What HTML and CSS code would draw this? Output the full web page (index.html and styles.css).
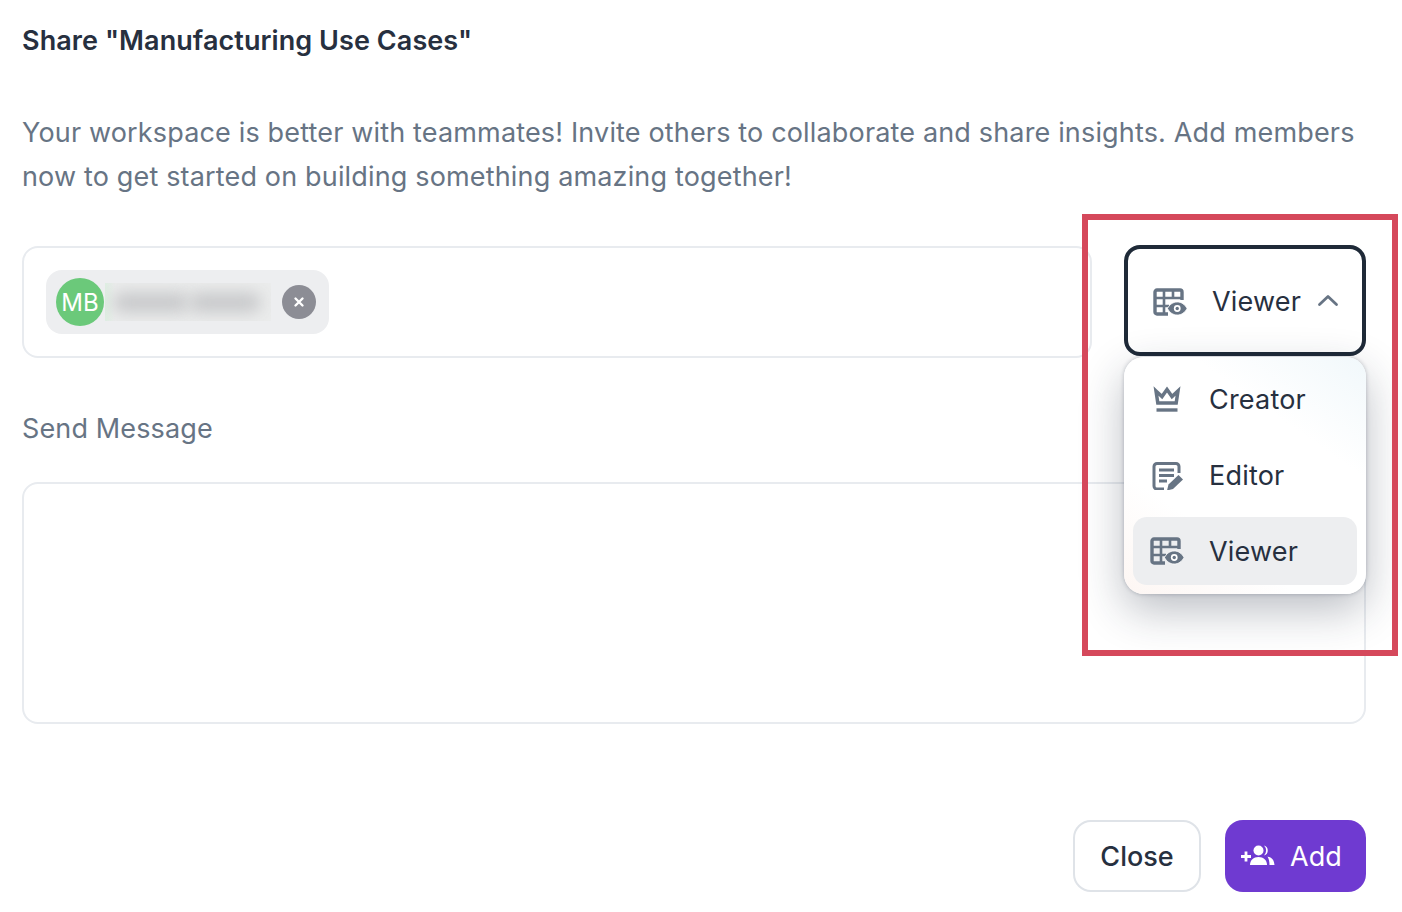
FILE: index.html
```html
<!DOCTYPE html>
<html lang="en">
<head>
<meta charset="utf-8">
<title>Share</title>
<link rel="stylesheet" href="styles.css">
</head>
<body>
<main class="dialog">
  <h1 class="title">Share "Manufacturing Use Cases"</h1>
  <p class="desc">Your workspace is better with teammates! Invite others to collaborate and share insights. Add members now to get started on building something amazing together!</p>

  <div class="invite">
    <div class="people">
      <div class="chip">
        <span class="avatar">MB</span>
        <span class="blurbox"><span class="blurtext"></span><span class="blurtext short"></span></span>
        <span class="remove">
          <svg viewBox="0 0 12 12" width="12" height="12"><path d="M2.500 2.500l7 7M9.500 2.500l-7 7" stroke="#fff" stroke-width="2.400" stroke-linecap="round" fill="none"/></svg>
        </span>
      </div>
    </div>
    <div class="role">
      <button class="select">
        <svg class="icon" viewBox="0 0 34 28" width="34" height="28"><use href="#viewer"/></svg>
        <span class="select-label">Viewer</span>
        <svg class="chev" viewBox="0 0 24 14" width="24" height="14"><path d="M3.500 11.500l8.500-8 8.500 8" fill="none" stroke="#677484" stroke-width="2.800" stroke-linecap="round" stroke-linejoin="round"/></svg>
      </button>
      <ul class="menu">
        <li class="item">
          <svg class="icon" viewBox="0 0 34 28" width="34" height="28"><path d="M6 5l6 5.500 5-7 5 7 6-5.500-1.800 12H7.800z" fill="none" stroke="#677484" stroke-width="3.500" stroke-linejoin="miter"/><path d="M6.500 24h21" stroke="#677484" stroke-width="3.400" fill="none"/></svg>
          <span>Creator</span>
        </li>
        <li class="item">
          <svg class="icon" viewBox="0 0 34 28" width="34" height="28"><path d="M29 11V4.500A3 3 0 0 0 26 1.500H7A3 3 0 0 0 4 4.500V24a3 3 0 0 0 3 3h7" fill="none" stroke="#677484" stroke-width="3"/><path d="M9 8h15M9 13.500h15M9 19h8" stroke="#677484" stroke-width="3" fill="none"/><path d="M17 28.500l1.500-6 10-9.500 4.500 4.500-10 9.500z" fill="#677484"/></svg>
          <span>Editor</span>
        </li>
        <li class="item active">
          <svg class="icon" viewBox="0 0 34 28" width="34" height="28"><use href="#viewer"/></svg>
          <span>Viewer</span>
        </li>
      </ul>
    </div>
  </div>

  <label class="msg-label">Send Message</label>
  <div class="textarea"></div>

  <div class="actions">
    <button class="btn close">Close</button>
    <button class="btn add">
      <svg viewBox="0 0 34 24" width="34" height="24"><path d="M0 12.500h10M5 7.500v10" stroke="#fff" stroke-width="2.800" fill="none"/><circle cx="17.500" cy="6.500" r="5" fill="#fff"/><path d="M9 21c0-5 3.500-8 8.500-8s8.500 3 8.500 8z" fill="#fff"/><path d="M23 1.500a5.200 5.200 0 0 1 0 10 7 7 0 0 0 0-10zM26.500 12.500c4.500 1 6.500 3.500 7 8.500h-5c0-3-.5-6-2-8.500z" fill="#fff"/></svg>
      <span>Add</span>
    </button>
  </div>
</main>

<div class="highlight"></div>

<svg class="defs" width="0" height="0" aria-hidden="true">
  <symbol id="viewer" viewBox="0 0 34 28">
    <path d="M15 26H4a2 2 0 0 1-2-2V4a2 2 0 0 1 2-2h23a2 2 0 0 1 2 2v8" fill="none" stroke="#677484" stroke-width="3.400"/>
    <path d="M2 10h27M2 18h14M11 2v24M20 2v8" fill="none" stroke="#677484" stroke-width="2.600"/>
    <path d="M14.500 20.500c2-4 5.500-6.500 9.750-6.500S32 16.500 34 20.500c-2 4-5.500 6.500-9.750 6.500S16.500 24.500 14.500 20.500z" fill="#677484" stroke="#fff" stroke-width=".8"/>
    <circle cx="24.250" cy="20.500" r="3.400" fill="#fff"/>
    <circle cx="24.250" cy="20.500" r="1.700" fill="#677484"/>
  </symbol>
</svg>
</body>
</html>
```
FILE: styles.css
```css
* { box-sizing: border-box; }
html, body { margin: 0; padding: 0; background: #fff; }
body { width: 1402px; height: 912px; overflow: hidden; font-family: Inter, "Liberation Sans", sans-serif; color: #1f2937; position: relative; }
.dialog { padding: 0 36px 0 22px; display: flex; flex-direction: column; height: 912px; }
.title { margin: 23px 0 0; font-size: 27px; line-height: 36px; font-weight: 600; color: #27303f; letter-spacing: .07px; }
.desc { margin: 52px 0 0; font-size: 27px; line-height: 44px; color: #677484; font-weight: 400; width: 1344px; letter-spacing: .16px; }
.invite { display: flex; margin-top: 48px; height: 112px; position: relative; }
.people { width: 1071px; height: 112px; margin-top: -1px; border: 2px solid #e8ebef; border-radius: 16px; padding: 22px; }
.chip { display: inline-flex; align-items: center; height: 64px; width: 283px; background: #edeef0; border-radius: 16px; padding: 0 13px 0 10px; }
.avatar { width: 48px; height: 48px; flex: none; border-radius: 50%; background: #6bc97a; color: #fff; font-size: 24px; display: flex; align-items: center; justify-content: center; }
.blurbox { width: 166px; height: 38px; flex: none; margin-left: 1px; overflow: hidden; display: flex; align-items: center; gap: 0; padding: 0 8px; background: linear-gradient(90deg, #deeee2 0, #ebecec 10px); }
.blurtext { display: block; width: 76px; height: 19px; background: #c6c7c9; border-radius: 9px; filter: blur(8px); }
.blurtext.short { width: 72px; }
.remove { width: 34px; height: 34px; flex: none; margin-left: auto; border-radius: 50%; background: #8c8d95; display: flex; align-items: center; justify-content: center; }
.role { margin-left: 32px; width: 242px; position: relative; z-index: 2; }
.select { width: 242px; height: 111px; margin-top: -2px; border: 4px solid #1f2a38; border-radius: 16px; background: #fff; display: flex; align-items: center; padding: 2px 0 0 25px; font: inherit; color: #27303f; }
.select-label { margin-left: 25px; font-size: 27px; letter-spacing: .2px; }
.chev { margin-left: 15px; margin-top: -4px; }
.icon { flex: none; display: block; }
.menu { list-style: none; margin: 0; padding: 9px; position: absolute; top: 110px; left: 0; width: 242px; height: 237px; background: linear-gradient(215deg, #f1f8fb 0, #fff 30%, #fff 70%, #fdf6f3 100%); border-radius: 20px; box-shadow: 0 16px 44px rgba(30,40,60,.3), 0 0 4px rgba(30,40,60,.28); display: flex; flex-direction: column; gap: 8px; }
.item { height: 68px; display: flex; align-items: center; padding-left: 17px; font-size: 27px; color: #27303f; gap: 25px; border-radius: 14px; letter-spacing: .2px; }
.item.active { background: #edeef0; }
.msg-label { margin-top: 52px; font-size: 27px; line-height: 36px; color: #677484; letter-spacing: .13px; }
.textarea { margin-top: 35px; height: 242px; border: 2px solid #e8ebef; border-radius: 16px; }
.actions { display: flex; justify-content: flex-end; gap: 24px; margin-top: 96px; }
.btn { height: 72px; border-radius: 18px; font: inherit; font-size: 27px; display: flex; align-items: center; justify-content: center; }
.close { width: 128px; background: #fff; border: 2px solid #dfe3e8; color: #27303f; font-weight: 500; }
.add { width: 141px; background: #6f3ad1; border: none; color: #fff; gap: 15px; justify-content: flex-start; padding: 0 0 0 16px; }
.highlight { position: absolute; left: 1082px; top: 214px; width: 316px; height: 442px; border: 6px solid #d5485b; pointer-events: none; z-index: 3; }
.defs { position: absolute; }
```
